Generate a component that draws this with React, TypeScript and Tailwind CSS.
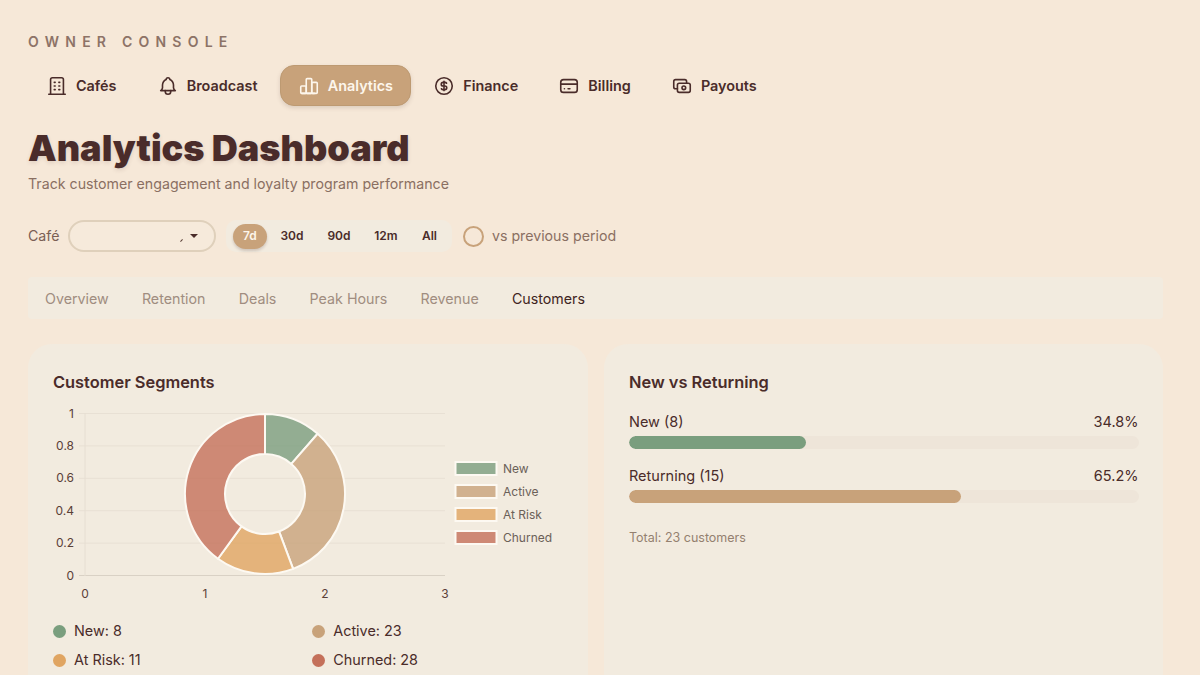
import React from "react";
import { TbBuilding, TbBell, TbChartBar, TbCoin, TbCreditCard, TbCash } from "react-icons/tb";

const nav = [
  { l: "Cafés", I: TbBuilding },
  { l: "Broadcast", I: TbBell },
  { l: "Analytics", I: TbChartBar, a: true },
  { l: "Finance", I: TbCoin },
  { l: "Billing", I: TbCreditCard },
  { l: "Payouts", I: TbCash },
];
const ranges = [
  { r: "7d", w: "w-[34px]" },
  { r: "30d", w: "ml-[1.5px] w-[47px]" },
  { r: "90d", w: "w-[47px]" },
  { r: "12m", w: "w-[47px]" },
  { r: "All", w: "w-[40px]" },
];
const tabs = ["Overview", "Retention", "Deals", "Peak Hours", "Revenue", "Customers"];
const segs = [
  { l: "New", v: 8, c: "#7a9e7e" },
  { l: "Active", v: 23, c: "#c8a27a" },
  { l: "At Risk", v: 11, c: "#e0a562" },
  { l: "Churned", v: 28, c: "#c4705a" },
];

function arc(a0: number, a1: number, R: number, r: number, cx: number, cy: number) {
  const p = (a: number, q: number) => [cx + q * Math.sin(a), cy - q * Math.cos(a)].map((n) => n.toFixed(2)).join(" ");
  const large = a1 - a0 > Math.PI ? 1 : 0;
  return `M${p(a0, R)}A${R} ${R} 0 ${large} 1 ${p(a1, R)}L${p(a1, r)}A${r} ${r} 0 ${large} 0 ${p(a0, r)}Z`;
}

function Chart() {
  const cx = 212, cy = 81, total = 70;
  let acc = 0;
  const ys = [0, 1, 2, 3, 4, 5].map((i) => ({ y: i * 32.4, t: ["1", "0.8", "0.6", "0.4", "0.2", "0"][i] }));
  return (
    <svg width="510" height="200" viewBox="0 0 510 200" className="block overflow-visible">
      {ys.map((g, i) => (
        <g key={i}>
          <line x1="26" x2="392" y1={g.y + 0.5} y2={g.y + 0.5} stroke={i === 5 ? "#d9d1c5" : "#e8e0d4"} strokeWidth="1" />
          <text x="21" y={g.y + 4.5} textAnchor="end" fontSize="12" fill="#5a4038">{g.t}</text>
        </g>
      ))}
      <line x1="32" x2="32" y1="0" y2="163" stroke="#e6ded2" strokeWidth="1" />
      {[0, 1, 2, 3].map((t) => (
        <text key={t} x={32 + t * 120} y="184.5" textAnchor="middle" fontSize="12" fill="#5a4038">{t}</text>
      ))}
      {segs.map((s) => {
        const a0 = (acc / total) * Math.PI * 2;
        acc += s.v;
        const a1 = (acc / total) * Math.PI * 2;
        return <path key={s.l} d={arc(a0, a1, 80, 40, cx, cy)} fill={s.c} fillOpacity="0.8" stroke="#fdf9f2" strokeWidth="2" strokeLinejoin="round" />;
      })}
      {segs.map((s, i) => (
        <g key={s.l}>
          <rect x="402.5" y={49 + i * 23} width="41" height="13" fill={s.c} fillOpacity="0.8" stroke="#fdf9f2" strokeWidth="2" />
          <text x="450" y={59.5 + i * 23} fontSize="12" fill="#6b6058">{s.l}</text>
        </g>
      ))}
    </svg>
  );
}

function Bar({ label, pct, w, color }: { label: string; pct: string; w: string; color: string }) {
  return (
    <div>
      <div className="flex justify-between text-[14.5px] leading-5 text-[#4a2c2a]">
        <span>{label}</span>
        <span>{pct}</span>
      </div>
      <div className="mt-[4px] h-[13px] rounded-full bg-[#eee5d9] overflow-hidden">
        <div className="h-full rounded-full" style={{ width: w, background: color }} />
      </div>
    </div>
  );
}

export default function App() {
  return (
    <div className="h-[675px] overflow-hidden bg-[#f6e8d8] pl-7 pr-[37px] pt-[33px] text-[#4a2c2a] font-['Inter',sans-serif]">
      <div className="text-[14px] leading-[17px] font-semibold tracking-[0.445em] text-[#8d7367]">OWNER CONSOLE</div>
      <nav className="mt-[15px] flex gap-[4.2px]">
        {nav.map(({ l, I, a }) => (
          <div
            key={l}
            className={
              a
                ? "flex h-[41px] items-center gap-2 rounded-[14px] border border-[#bd9a72] bg-[#c8a27a] px-[17px] text-[14.4px] font-semibold text-[#fdf6ec] shadow-[0_2px_4px_rgba(74,44,42,0.15)]"
                : "flex h-[41px] items-center gap-2 px-[18px] text-[14.4px] font-semibold text-[#4a2c2a]"
            }
          >
            <I size={22} strokeWidth={1.75} />
            <span>{l}</span>
          </div>
        ))}
      </nav>
      <h1 className="mt-[19px] text-[36.1px] leading-[46px] font-black text-[#4a2c2a] [text-shadow:0_2px_4px_rgba(74,44,42,0.12)]">Analytics Dashboard</h1>
      <p className="mt-[3px] text-[14.2px] leading-5 text-[#8a6f62]">Track customer engagement and loyalty program performance</p>
      <div className="mt-[25px] flex h-8 translate-y-px items-center">
        <span className="text-[14.2px] text-[#7a5f54]">Café</span>
        <div className="relative ml-[8.5px] h-8 w-[148px] rounded-full border-2 border-[#dfd0bb] bg-[#f6eadb]">
          <span className="absolute right-[16px] top-[11.5px] h-0 w-0 border-x-[4.5px] border-t-[4.5px] border-x-transparent border-t-[#4a2c2a]" />
          <span className="absolute right-[32px] top-[17px] h-[3px] w-[1px] rotate-45 bg-[#5a4038]" />
        </div>
        <div className="ml-[10px] flex h-8 w-[226px] items-center rounded-[10px] bg-[#f2ebdf] pl-[7px]">
          {ranges.map(({ r, w }, i) => (
            <span
              key={r}
              className={
                i === 0
                  ? `flex h-[25px] ${w} items-center justify-center rounded-full bg-[#c8a27a] text-[12px] font-semibold text-[#fdf6ec] shadow-[0_2px_3px_rgba(74,44,42,0.2)]`
                  : `flex h-[25px] ${w} items-center justify-center text-[12px] font-semibold text-[#4a2c2a]`
              }
            >
              {r}
            </span>
          ))}
        </div>
        <span className="ml-[11.5px] h-[21px] w-[21px] rounded-full border-2 border-[#c8a27a]" />
        <span className="ml-[7.5px] text-[14.2px] text-[#8a6f62]">vs previous period</span>
      </div>
      <div className="mt-[26px] flex h-[42px] items-center gap-[33.2px] rounded-[4px] bg-[#f2ebdf] pl-[17px] pt-[1px] text-[14.25px]">
        {tabs.map((t) => (
          <span key={t} className={t === "Customers" ? "text-[#3f2422]" : "text-[#a08d80]"}>{t}</span>
        ))}
      </div>
      <div className="mt-[25px] grid grid-cols-2 gap-4">
        <section className="h-[400px] rounded-[24px] bg-[#f2ebdf] pl-[25px] pr-[16px] pt-[27px]">
          <h2 className="text-[16.4px] leading-[22px] font-semibold text-[#4a2c2a]">Customer Segments</h2>
          <div className="mt-5"><Chart /></div>
          <div className="mt-[8px] grid grid-cols-2 gap-y-[9px] text-[14.4px] leading-5 text-[#4a2c2a]">
            {segs.map((s) => (
              <div key={s.l} className="flex items-center gap-[8px]">
                <span className="h-[13px] w-[13px] rounded-full" style={{ background: s.c }} />
                <span>{s.l}: {s.v}</span>
              </div>
            ))}
          </div>
        </section>
        <section className="h-[400px] rounded-[24px] bg-[#f2ebdf] pl-[25.5px] pr-[24.5px] pt-[27px]">
          <h2 className="text-[16.4px] leading-[22px] font-semibold text-[#4a2c2a]">New vs Returning</h2>
          <div className="mt-[19px] flex flex-col gap-[17px]">
            <Bar label="New (8)" pct="34.8%" w="34.8%" color="#7a9e7e" />
            <Bar label="Returning (15)" pct="65.2%" w="65.2%" color="#c8a27a" />
          </div>
          <p className="mt-[27px] text-[12.5px] leading-4 text-[#94806f]">Total: 23 customers</p>
        </section>
      </div>
    </div>
  );
}
